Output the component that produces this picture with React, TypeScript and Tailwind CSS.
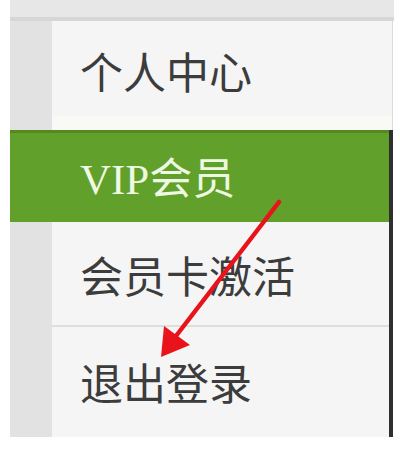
const MENU_FONT = '"Liberation Serif", "Noto Sans CJK SC", serif';

function Arrow() {
  return (
    <svg className="pointer-events-none absolute left-0 top-0" width="400" height="460" viewBox="0 0 400 460">
      <line x1="279" y1="202" x2="176" y2="336" stroke="#e8131b" strokeWidth="4.5" strokeLinecap="round" />
      <polygon points="161,357 164,326 190,345" fill="#e8131b" />
    </svg>
  );
}

export default function App() {
  return (
    <div className="relative h-[460px] w-[400px] overflow-hidden bg-white" style={{ fontFamily: MENU_FONT }}>
      <div className="ml-[10px] h-[21px] w-[384px] border-b-[4px] border-[#d6d6d6] bg-[#e7e7e7]" />
      <div className="ml-[10px] w-[383px]">
        <div className="flex h-[109px]">
          <div className="w-[42px] bg-[#e2e2e2]" />
          <div className="flex flex-1 flex-col border-r border-[#dcdcdc] bg-[#f5f5f5]">
            <div className="flex flex-1 items-center pl-[28px] pt-[12px] text-[43px] leading-none text-[#3c3c3c]">个人中心</div>
            <div className="h-[14px] bg-[#f9f9f5]" />
          </div>
        </div>
        <div className="border-r-[4px] border-[#2f2f2f]">
          <div className="flex h-[92px] items-center border-t-[3px] border-[#55881f] bg-[#61a02a] pl-[70px] pt-[4px] text-[43px] leading-none text-[#eef8e2]">
            VIP会员
          </div>
          <div className="flex h-[105px]">
            <div className="w-[42px] bg-[#e2e2e2]" />
            <div className="flex flex-1 items-center border-b-[2px] border-[#dedede] bg-[#f5f5f5] pl-[28px] pt-[10px] text-[43px] leading-none text-[#3c3c3c]">
              会员卡激活
            </div>
          </div>
          <div className="flex h-[110px]">
            <div className="w-[42px] bg-[#e2e2e2]" />
            <div className="flex flex-1 items-center bg-[#f5f5f5] pl-[28px] pt-[6px] text-[43px] leading-none text-[#3c3c3c]">
              退出登录
            </div>
          </div>
        </div>
      </div>
      <Arrow />
    </div>
  );
}
